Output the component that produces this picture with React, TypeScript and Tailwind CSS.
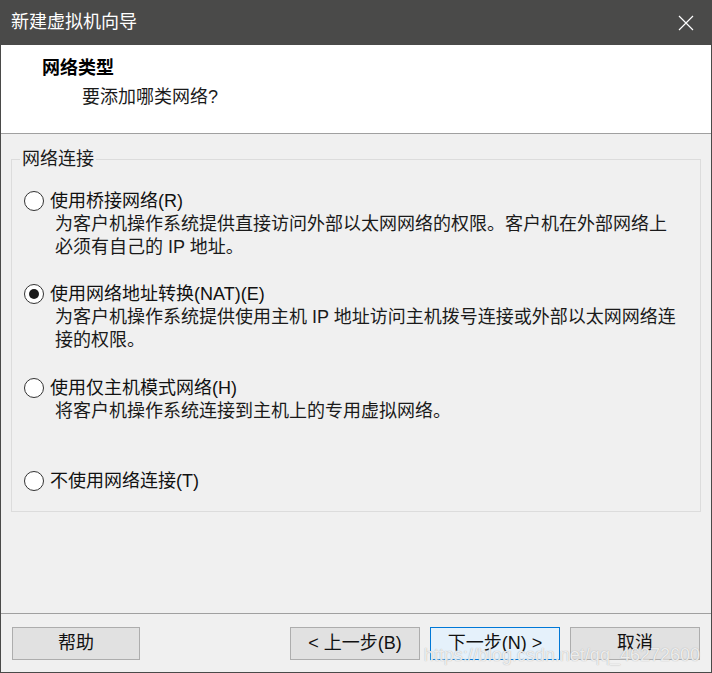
import React from "react";

const font = { fontFamily: '"Liberation Sans", "Noto Sans CJK SC", sans-serif' };

function Radio({ checked }: { checked?: boolean }) {
  return (
    <span className="mr-[6px] flex h-[20px] w-[20px] shrink-0 items-center justify-center rounded-full border-[1.5px] border-[#333333] bg-white">
      {checked && <span className="h-[10px] w-[10px] rounded-full bg-[#1a1a1a]" />}
    </span>
  );
}

function Option({
  label,
  lines,
  checked,
  className,
}: {
  label: string;
  lines?: string[];
  checked?: boolean;
  className?: string;
}) {
  return (
    <div className={className}>
      <div className="flex h-[24px] items-center pl-[12px] text-[18px] text-[#111]">
        <Radio checked={checked} />
        <span className="whitespace-nowrap">{label}</span>
      </div>
      {lines?.map((l) => (
        <div key={l} className="h-[23px] whitespace-nowrap pl-[43px] text-[18px] leading-[23px] text-[#1a1a1a]">
          {l}
        </div>
      ))}
    </div>
  );
}

function Button({ children, primary, wide }: { children: React.ReactNode; primary?: boolean; wide?: boolean }) {
  return (
    <button
      className={
        "flex h-[33px] items-center justify-center border text-[18px] text-[#111] " +
        (wide ? "w-[130px] " : "w-[128px] ") +
        (primary ? "border-[#0078d7] bg-[#e5f1fb]" : "border-[#adadad] bg-[#e1e1e1]")
      }
    >
      {children}
    </button>
  );
}

export default function App() {
  return (
    <div className="relative flex h-[673px] w-[712px] flex-col bg-[#f0f0f0]" style={font}>
      <div className="flex h-[45px] shrink-0 items-center justify-between bg-[#4a4a49] pl-[11px] pr-[18px]">
        <span className="text-[18px] text-white">新建虚拟机向导</span>
        <svg width="16" height="16" viewBox="0 0 16 16" fill="none" stroke="white" strokeWidth="1.2">
          <path d="M1 1 L15 15 M15 1 L1 15" />
        </svg>
      </div>
      <div className="flex min-h-0 flex-1 flex-col border-x border-b border-[#4a4a49]">
        <div className="h-[89px] shrink-0 border-b border-[#a0a0a0] bg-white pt-[12px]">
          <div className="pl-[41px] text-[18px] font-bold leading-[22px] text-black">网络类型</div>
          <div className="mt-[7px] pl-[81px] text-[18px] leading-[22px] text-[#1a1a1a]">要添加哪类网络?</div>
        </div>
        <div className="h-[479px] shrink-0 px-[10px] pt-[15px]">
          <fieldset className="m-0 border border-[#dcdcdc] p-0 pb-[18px] pr-[11px]">
            <legend className="ml-[8px] px-[2px] text-[18px] leading-[20px] text-[#1a1a1a]">网络连接</legend>
            <Option
              className="pt-[20px]"
              label="使用桥接网络(R)"
              lines={["为客户机操作系统提供直接访问外部以太网网络的权限。客户机在外部网络上", "必须有自己的 IP 地址。"]}
            />
            <Option
              className="mt-[23px]"
              checked
              label="使用网络地址转换(NAT)(E)"
              lines={["为客户机操作系统提供使用主机 IP 地址访问主机拨号连接或外部以太网网络连", "接的权限。"]}
            />
            <Option
              className="mt-[24px]"
              label="使用仅主机模式网络(H)"
              lines={["将客户机操作系统连接到主机上的专用虚拟网络。"]}
            />
            <Option className="mt-[46px]" label="不使用网络连接(T)" />
          </fieldset>
        </div>
        <div className="flex flex-1 items-start border-t border-[#a0a0a0] pl-[11px] pr-[11px] pt-[13px]">
          <Button>帮助</Button>
          <div className="ml-auto flex gap-[10px]">
            <Button wide>&lt; 上一步(B)</Button>
            <Button wide primary>下一步(N) &gt;</Button>
            <Button wide>取消</Button>
          </div>
        </div>
      </div>
      <div className="pointer-events-none absolute bottom-[4px] right-[12px] text-[18px] text-white/80 [text-shadow:0_0_1px_#9a9a9a]">
        https://blog.csdn.net/qq_46272600
      </div>
    </div>
  );
}
